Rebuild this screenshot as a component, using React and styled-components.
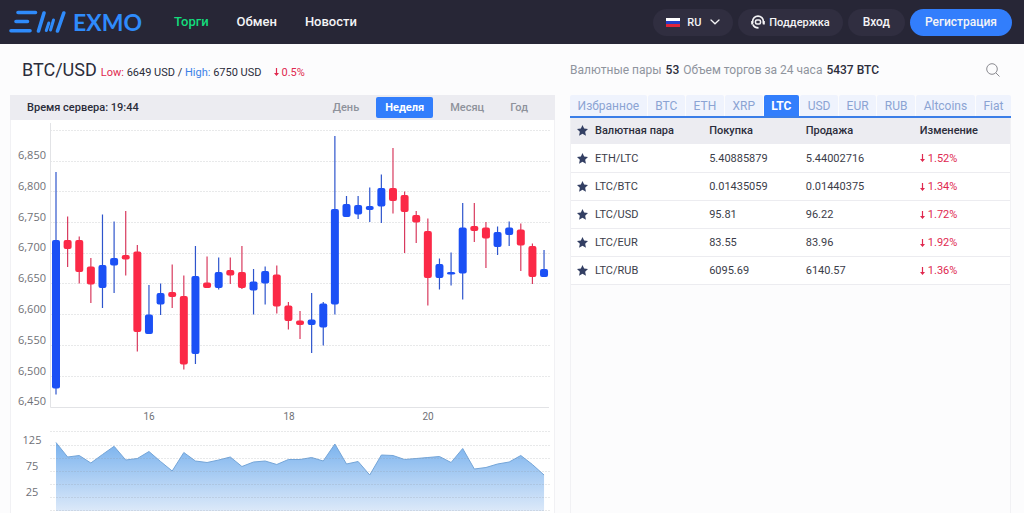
import React, { useState } from "react";
import styled, { createGlobalStyle, css } from "styled-components";

const GlobalStyle = createGlobalStyle`
  * {
    box-sizing: border-box;
  }

  body {
    margin: 0;
    background: #fcfcfd;
    color: #2b2d3b;
    font-family: Roboto, sans-serif;
    font-size: 12px;
  }

  button, select {
    font-family: inherit;
    border: 0;
    padding: 0;
    background: none;
    cursor: pointer;
  }

  a {
    text-decoration: none;
  }
`;

const Header = styled.header`
  display: flex;
  align-items: center;
  justify-content: space-between;
  height: 44px;
  padding: 0 12px 0 9px;
  background: #272636;
`;

const HeaderSide = styled.div`
  display: flex;
  align-items: center;
`;

const Logo = styled.a`
  display: flex;
  align-items: center;
  gap: 7px;
  margin-right: 32px;
  color: #2f8bfb;
  font-family: Lato, sans-serif;
  font-size: 23px;
  font-weight: 700;
  line-height: 28px;
`;

const Nav = styled.nav`
  display: flex;
  gap: 28px;
`;

const NavLink = styled.a`
  color: ${(props) => (props.$active ? "#13dc7c" : "#f4f4f6")};
  font-size: 13px;
  font-weight: 500;
  line-height: 20px;
`;

const Actions = styled.div`
  display: flex;
  gap: 5px;
`;

const pill = css`
  display: flex;
  align-items: center;
  height: 27px;
  padding: 0 15px;
  border-radius: 14px;
  background: #302e40;
  color: #f4f4f6;
  font-size: 12px;
  font-weight: 500;
`;

const LanguagePill = styled.label`
  ${pill}
  gap: 7px;
  padding: 0 13px;
`;

const LanguageSelect = styled.select`
  appearance: none;
  width: 16px;
  color: inherit;
  font-size: 11px;
  font-weight: 500;
`;

const PillLink = styled.a`
  ${pill}
  gap: 4px;
  padding: 0 13px;
  font-size: 11px;
`;

const PillButton = styled.button`
  ${pill}
  background: ${(props) => (props.$primary ? "#327efc" : "#302e40")};
`;

const Page = styled.main`
  display: grid;
  grid-template-columns: 545fr 441fr;
  gap: 15px;
  padding: 0 13px 0 10px;
`;

const Column = styled.section`
  display: flex;
  flex-direction: column;
  min-width: 0;
`;

const ColumnHead = styled.div`
  display: flex;
  align-items: center;
  justify-content: space-between;
  height: 51px;
  padding-right: 11px;
`;

const PairTitle = styled.div`
  display: flex;
  align-items: baseline;
  gap: 4px;
  padding-left: 12px;
  font-size: 11px;

  h1 {
    margin: 0;
    font-size: 18px;
    font-weight: 400;
  }
`;

const Low = styled.span`
  color: #e0294f;
`;

const High = styled.span`
  color: #3a80e8;
`;

const Summary = styled.p`
  margin: 0;
  color: #8f949d;
  font-size: 12px;

  b {
    padding: 0 1px;
    color: #2b2d3b;
    font-weight: 500;
  }
`;

const SearchButton = styled.button`
  display: flex;
  color: #8a8a90;
`;

const Toolbar = styled.div`
  display: flex;
  align-items: center;
  justify-content: space-between;
  height: 25px;
  padding: 0 18px 0 17px;
  background: #ececf1;
  font-size: 11px;
  font-weight: 500;
`;

const Periods = styled.div`
  display: flex;
  gap: 8px;
`;

const PeriodButton = styled.button`
  height: 21px;
  padding: 0 9px;
  border-radius: 2px;
  background: ${(props) => (props.$active ? "#327efc" : "transparent")};
  color: ${(props) => (props.$active ? "#fff" : "#8e929b")};
  font-size: 11px;
  font-weight: ${(props) => (props.$active ? 700 : 500)};
`;

const ChartPanel = styled.div`
  border: solid #f1f1f4;
  border-width: 0 1px;
  background: #fff;
`;

const Chart = styled.svg`
  display: block;
  width: 100%;

  text {
    fill: #6f7177;
  }
`;

const Tabs = styled.div`
  display: flex;
  gap: 1px;
  height: 23px;
  border-bottom: 2px solid #3a7ee8;
`;

const Tab = styled.button`
  flex: 1 1 auto;
  padding: 0 7px;
  border-radius: 2px 2px 0 0;
  background: ${(props) => (props.$active ? "#327efc" : "#eff3fd")};
  color: ${(props) => (props.$active ? "#fff" : "#8ba3d3")};
  font-size: 12px;
  font-weight: ${(props) => (props.$active ? 700 : 400)};
`;

const TableBox = styled.div`
  flex: 1;
  border: solid #f1f1f4;
  border-width: 0 1px;
`;

const Table = styled.table`
  width: 100%;
  table-layout: fixed;
  border-collapse: separate;
  border-spacing: 0;
  color: #3b3d49;
  font-size: 11px;

  th {
    height: 26px;
    padding: 0 0 2px;
    background: #ececf1;
    color: #2b2d3b;
    font-weight: 500;
    text-align: left;
  }

  td {
    height: 28px;
    padding: 0;
    border-bottom: 1px solid #ececf0;
    background: #fff;
  }

  tbody tr:first-child td {
    height: 29px;
  }

  svg {
    display: block;
  }
`;

const StarCell = styled.td`
  && {
    padding-left: 6px;
  }
`;

const Change = styled.span`
  display: flex;
  align-items: center;
  gap: 3px;
  color: #e0294f;
`;

const PairChange = styled(Change)`
  align-items: baseline;
  margin-left: 8px;
`;

function LogoMark() {
  return (
    <svg width="57" height="24" viewBox="0 0 57 24" fill="none" stroke="#2f8bfb" strokeWidth="3.6" strokeLinecap="round">
      <path d="M9 2.5H26.500M7 11.500H18.500M2 20.800H21" />
      <path d="M35 3L29.500 21M54.800 3L48.500 21" />
      <path d="M39.800 13L37.300 20.500M44.500 10L41.500 20" strokeWidth="3" />
    </svg>
  );
}

function Flag() {
  return (
    <svg width="14" height="9" viewBox="0 0 14 9">
      <rect width="14" height="3" fill="#fff" />
      <rect y="3" width="14" height="3" fill="#2440c8" />
      <rect y="6" width="14" height="3" fill="#e02438" />
    </svg>
  );
}

function Chevron() {
  return (
    <svg width="10" height="6" viewBox="0 0 10 6" fill="none" stroke="#f4f4f6" strokeWidth="1.3" strokeLinecap="round">
      <path d="M1 1L5 4.800L9 1" />
    </svg>
  );
}

function Headset() {
  return (
    <svg width="14" height="14" viewBox="0 0 14 14" fill="none" stroke="#f4f4f6">
      <path d="M1.600 8V6.500a5.400 5.400 0 0 1 10.800 0V8.500" strokeWidth="1.600" />
      <path d="M1.200 6V9.500M12.800 6V9.500" strokeWidth="2" />
      <rect x="4.500" y="5" width="5" height="4" rx="1.400" strokeWidth="1.600" />
      <path d="M2 9.500C2.800 11.800 4.600 12.800 7.500 12.800" strokeWidth="1.800" />
    </svg>
  );
}

function SearchIcon() {
  return (
    <svg width="14" height="14" viewBox="0 0 14 14" fill="none" stroke="currentColor">
      <circle cx="6" cy="6" r="5.300" />
      <path d="M9.800 9.800L13.500 13.500" />
    </svg>
  );
}

function Star() {
  return (
    <svg width="11" height="11" viewBox="0 0 24 24" fill="#333f63">
      <path d="M12 0l3.600 7.900 8.400 1-6.200 5.900 1.700 8.700L12 19.200l-7.500 4.300 1.700-8.700L0 8.900l8.400-1z" />
    </svg>
  );
}

function DownArrow() {
  return (
    <svg width="5" height="8" viewBox="0 0 5 8">
      <path d="M1.900 0h1.200v5H5L2.500 8 0 5h1.900z" fill="#e0294f" />
    </svg>
  );
}

// up (1) or down (0), top of wick, bottom of wick, top of body, bottom of body
const candles = [
  [1, 172, 394.5, 240, 388.5], [0, 216.5, 267, 240, 249], [0, 236.5, 283.5, 240, 272],
  [0, 258, 303, 266.5, 284.5], [1, 214.5, 308, 265, 288], [1, 221.5, 293, 258, 265.5],
  [0, 211, 275.5, 255, 259.5], [0, 245, 351.5, 251.5, 332], [1, 285, 334, 314.5, 334],
  [1, 283.5, 315, 293, 304.5], [0, 264.5, 308, 292, 297], [0, 275.5, 369.5, 296, 364.5],
  [1, 246, 364, 276, 354], [0, 256.5, 288, 282.5, 288], [1, 257.5, 289.5, 272, 288],
  [0, 257.5, 284, 270, 275.5], [0, 246, 289, 272, 288], [1, 269, 314.5, 281.5, 290.5],
  [1, 266.5, 304.5, 271, 283.5], [0, 265.5, 313.5, 274.5, 306.5], [0, 302, 329.5, 305.5, 321],
  [0, 311, 339, 320.5, 325], [1, 293, 353, 319.5, 325], [1, 302, 345.5, 303.5, 327.5],
  [1, 136, 314.5, 209, 304.5], [1, 196, 217, 204, 217], [1, 196, 219, 205, 214.5],
  [1, 187.5, 222, 206, 210], [1, 174.5, 223, 188, 206.5], [0, 148, 213.5, 188, 201],
  [0, 191.5, 253, 195, 212], [0, 211, 243, 215, 222.5], [0, 218.5, 305.5, 231, 278],
  [1, 258.5, 289.5, 264, 278], [1, 252.5, 285.5, 272, 274.5], [1, 203, 299.5, 227.5, 273.5],
  [0, 203, 242, 226, 231], [0, 222, 268, 227.5, 238.5], [1, 226.5, 255, 232, 247],
  [1, 221.5, 246, 227.5, 235], [0, 223.5, 271, 229.5, 245.5], [0, 243.5, 284, 246, 277],
  [1, 250, 277, 269, 277],
];

const volume = [
  442.5, 457, 455.5, 463, 454.5, 446.3, 460, 458.5, 451.5, 461.5, 471, 452.5, 461, 462.5, 460,
  457, 466.5, 462, 461, 464.5, 459.5, 459.5, 457.5, 461, 444, 464, 461.5, 475, 455, 455.5,
  459.5, 458.5, 457.5, 456.5, 462.5, 448.5, 469, 467.5, 464, 462, 455.5, 464.5, 475,
];

const prices = ["6,850", "6,800", "6,750", "6,700", "6,650", "6,600", "6,550", "6,500", "6,450"];
const priceLines = [130.5, 161.5, 191.5, 222.5, 253.5, 283.5, 314.5, 345.5, 376.5];
const volumeLines = [431.5, 445.5, 458.5, 471.5, 484.5, 497.5, 510.5];

const pointX = (i) => 56 + i * 11.62;

function PriceChart() {
  const line = volume.map((y, i) => `${pointX(i)},${y}`).join(" L");
  return (
    <Chart viewBox="11 120 543 393" role="img" aria-label="BTC/USD">
      <defs>
        <linearGradient id="volume" x1="0" y1="442" x2="0" y2="511" gradientUnits="userSpaceOnUse">
          <stop offset="0" stopColor="#79b2ee" />
          <stop offset="1" stopColor="#dce9f9" />
        </linearGradient>
      </defs>
      <path d={`M56,511 L${line} L${pointX(42)},511 Z`} fill="url(#volume)" />
      <path d={`M${line}`} fill="none" stroke="#74a5d8" />
      {[...priceLines, ...volumeLines].map((y) => (
        <path key={y} d={`M50 ${y}H550`} stroke="#8a8f98" strokeOpacity="0.2" strokeDasharray="2 1" />
      ))}
      <path d="M50.500 123V407.500H549" fill="none" stroke="#e2e3e6" />
      {candles.map(([up, high, low, top, bottom], i) => {
        const color = up ? "#1b50f5" : "#fb2947";
        return (
          <g key={i}>
            <path d={`M${pointX(i)} ${high}V${low}`} stroke={up ? "#2e55cc" : "#d83a5e"} strokeWidth="1.2" />
            <rect x={pointX(i) - 4} y={top} width="8" height={bottom - top} rx="2" fill={color} />
          </g>
        );
      })}
      <g fontFamily="Open Sans, Noto Sans, sans-serif" fontSize="11">
        {prices.map((price, i) => (
          <text key={price} x="46" y={159 + Math.round(i * 30.8)} textAnchor="end">{price}</text>
        ))}
        <text x="32" y="444" textAnchor="middle">125</text>
        <text x="32" y="470" textAnchor="middle">75</text>
        <text x="32" y="496" textAnchor="middle">25</text>
      </g>
      <g fontFamily="Roboto, sans-serif" fontSize="10" textAnchor="middle">
        <text x="149" y="420">16</text>
        <text x="289" y="420">18</text>
        <text x="428" y="420">20</text>
      </g>
    </Chart>
  );
}

const periods = ["День", "Неделя", "Месяц", "Год"];
const tabs = ["Избранное", "BTC", "ETH", "XRP", "LTC", "USD", "EUR", "RUB", "Altcoins", "Fiat"];
const rows = [
  ["ETH/LTC", "5.40885879", "5.44002716", "1.52%"],
  ["LTC/BTC", "0.01435059", "0.01440375", "1.34%"],
  ["LTC/USD", "95.81", "96.22", "1.72%"],
  ["LTC/EUR", "83.55", "83.96", "1.92%"],
  ["LTC/RUB", "6095.69", "6140.57", "1.36%"],
];

export default function App() {
  const [period, setPeriod] = useState("Неделя");
  const [tab, setTab] = useState("LTC");

  return (
    <>
      <GlobalStyle />
      <Header>
        <HeaderSide>
          <Logo href="#">
            <LogoMark />
            EXMO
          </Logo>
          <Nav>
            <NavLink href="#" $active>Торги</NavLink>
            <NavLink href="#">Обмен</NavLink>
            <NavLink href="#">Новости</NavLink>
          </Nav>
        </HeaderSide>
        <Actions>
          <LanguagePill>
            <Flag />
            <LanguageSelect aria-label="Язык">
              <option>RU</option>
            </LanguageSelect>
            <Chevron />
          </LanguagePill>
          <PillLink href="#">
            <Headset />
            Поддержка
          </PillLink>
          <PillButton>Вход</PillButton>
          <PillButton $primary>Регистрация</PillButton>
        </Actions>
      </Header>

      <Page>
        <Column>
          <ColumnHead>
            <PairTitle>
              <h1>BTC/USD</h1>
              <span>
                <Low>Low:</Low> 6649 USD / <High>High:</High> 6750 USD
              </span>
              <PairChange>
                <DownArrow />
                0.5%
              </PairChange>
            </PairTitle>
          </ColumnHead>
          <Toolbar>
            <span>Время сервера: 19:44</span>
            <Periods>
              {periods.map((name) => (
                <PeriodButton key={name} $active={name === period} onClick={() => setPeriod(name)}>
                  {name}
                </PeriodButton>
              ))}
            </Periods>
          </Toolbar>
          <ChartPanel>
            <PriceChart />
          </ChartPanel>
        </Column>

        <Column>
          <ColumnHead>
            <Summary>
              Валютные пары <b>53</b> Объем торгов за 24 часа <b>5437 BTC</b>
            </Summary>
            <SearchButton aria-label="Поиск">
              <SearchIcon />
            </SearchButton>
          </ColumnHead>
          <Tabs>
            {tabs.map((name) => (
              <Tab key={name} $active={name === tab} onClick={() => setTab(name)}>
                {name}
              </Tab>
            ))}
          </Tabs>
          <TableBox>
            <Table>
              <colgroup>
                <col style={{ width: 24 }} />
                <col style={{ width: "26%" }} />
                <col style={{ width: "22%" }} />
                <col style={{ width: "26%" }} />
                <col />
              </colgroup>
              <thead>
                <tr>
                  <StarCell as="th"><Star /></StarCell>
                  <th>Валютная пара</th>
                  <th>Покупка</th>
                  <th>Продажа</th>
                  <th>Изменение</th>
                </tr>
              </thead>
              <tbody>
                {rows.map(([pair, buy, sell, change]) => (
                  <tr key={pair}>
                    <StarCell><Star /></StarCell>
                    <td>{pair}</td>
                    <td>{buy}</td>
                    <td>{sell}</td>
                    <td>
                      <Change>
                        <DownArrow />
                        {change}
                      </Change>
                    </td>
                  </tr>
                ))}
              </tbody>
            </Table>
          </TableBox>
        </Column>
      </Page>
    </>
  );
}
